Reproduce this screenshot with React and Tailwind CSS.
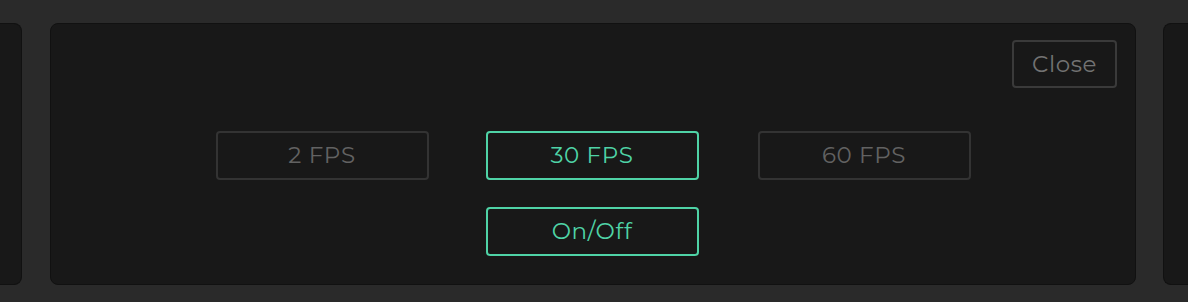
export default function App() {
  const font = { fontFamily: '"Montserrat", "Lato", "Noto Sans", sans-serif' };
  return (
    <div className="w-[1188px] h-[302px] bg-[#2a2a2a] flex pt-[23px] pb-[17px] overflow-hidden" style={font}>
      <div className="w-[22px] shrink-0 bg-[#181818] rounded-r-[8px] border border-l-0 border-[#111]" />
      <div className="ml-[28px] w-[1086px] shrink-0 bg-[#181818] rounded-[8px] border border-[#111] flex flex-col pt-[16px] pr-[18px]">
        <div className="flex justify-end">
          <button className="w-[105px] h-[48px] border-2 border-[#3a3a3a] rounded-[4px] text-[#727272] text-[23px] tracking-[0.6px]">
            Close
          </button>
        </div>
        <div className="mt-[43px] flex flex-col items-center gap-[27px] pl-[18px]">
          <div className="flex gap-[57px]">
            <button className="w-[213px] h-[49px] border-2 border-[#333] rounded-[4px] text-[#626262] text-[23px] tracking-[0.6px]">
              2 FPS
            </button>
            <button className="w-[213px] h-[49px] border-2 border-[#4fd3a6] rounded-[4px] text-[#4fd3a6] text-[23px] tracking-[0.6px]">
              30 FPS
            </button>
            <button className="w-[213px] h-[49px] border-2 border-[#333] rounded-[4px] text-[#626262] text-[23px] tracking-[0.6px] ml-[2px]">
              60 FPS
            </button>
          </div>
          <button className="w-[213px] h-[49px] border-2 border-[#4fd3a6] rounded-[4px] text-[#4fd3a6] text-[23px] tracking-[0.6px] -ml-[2px]">
            On/Off
          </button>
        </div>
      </div>
      <div className="ml-[27px] flex-1 bg-[#181818] rounded-l-[8px] border border-r-0 border-[#111]" />
    </div>
  );
}
